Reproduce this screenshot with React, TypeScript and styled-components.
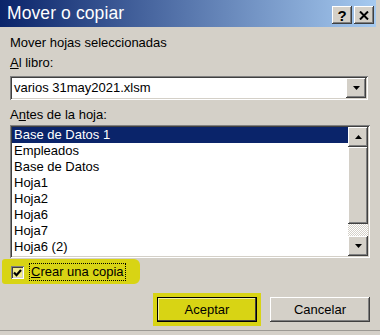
import React from "react";
import styled, { createGlobalStyle } from "styled-components";

const Global = createGlobalStyle`
  html, body { margin: 0; padding: 0; background: #d4d0c8; }
  body { font-family: "Liberation Sans", Arial, sans-serif; font-size: 13px; color: #000; }
`;

const FACE = "#d4d0c8";
const NAVY = "#0a246a";
const YELLOW = "#d8d414";

const raised = `
  background: ${FACE};
  box-shadow: inset -1px -1px #404040, inset 1px 1px #ffffff,
    inset -2px -2px #808080, inset 2px 2px ${FACE};
`;

const sunken = `
  box-shadow: inset 1px 1px #808080, inset -1px -1px #ffffff,
    inset 2px 2px #404040, inset -2px -2px ${FACE};
`;

const Window = styled.div`
  width: 380px;
  height: 331px;
  display: flex;
  flex-direction: column;
  background: ${FACE};
  border-bottom: 1px solid #9c9a94;
  box-sizing: border-box;
`;

const TitleBar = styled.div`
  height: 27px;
  width: 376px;
  box-sizing: border-box;
  display: flex;
  align-items: center;
  justify-content: space-between;
  padding: 0 2px 0 7px;
  background: linear-gradient(to right, ${NAVY}, #a6caf0);
`;

const Title = styled.span`
  color: #fff;
  font-size: 17.5px;
  letter-spacing: 0.1px;
`;

const Controls = styled.div`
  display: flex;
  gap: 2px;
  margin-top: 3px;
`;

const CaptionButton = styled.div`
  ${raised}
  width: 20px;
  height: 18px;
  display: flex;
  align-items: center;
  justify-content: center;
  font-weight: bold;
  font-size: 15px;
  line-height: 1;
`;

const Body = styled.div`
  display: flex;
  flex-direction: column;
  padding: 8px 10px 0 10px;
  width: 380px;
  box-sizing: border-box;
`;

const Label = styled.div<{ $gap?: number }>`
  line-height: 16px;
  height: 16px;
  margin-top: ${(p) => p.$gap ?? 0}px;
  white-space: nowrap;
`;

const Combo = styled.div`
  ${sunken}
  background: #fff;
  margin-top: 5px;
  height: 24px;
  width: 358px;
  box-sizing: border-box;
  padding: 2px;
  display: flex;
  align-items: center;
`;

const ComboText = styled.span`
  flex: 1;
  padding-left: 2px;
  line-height: 20px;
`;

const ArrowButton = styled.div<{ $h?: number }>`
  ${raised}
  width: 20px;
  height: ${(p) => p.$h ?? 20}px;
  display: flex;
  align-items: center;
  justify-content: center;
  flex: none;
`;

const ListBox = styled.div`
  ${sunken}
  background: #fff;
  margin-top: 2px;
  height: 133px;
  width: 360px;
  box-sizing: border-box;
  padding: 2px;
  display: flex;
`;

const Rows = styled.div`
  flex: 1;
  display: flex;
  flex-direction: column;
`;

const Row = styled.div<{ $selected?: boolean }>`
  height: 16px;
  line-height: 16px;
  padding-left: 2px;
  background: ${(p) => (p.$selected ? NAVY : "transparent")};
  color: ${(p) => (p.$selected ? "#fff" : "#000")};
  white-space: nowrap;
`;

const ScrollBar = styled.div`
  width: 20px;
  display: flex;
  flex-direction: column;
`;

const Thumb = styled.div`
  ${raised}
  height: 77px;
`;

const Track = styled.div`
  flex: 1;
  background: repeating-conic-gradient(${FACE} 0 25%, #ffffff 0 50%) 0 0 / 2px 2px;
`;

const CheckRow = styled.div`
  margin: 1px 0 0 -8px;
  width: 138px;
  height: 25px;
  background: ${YELLOW};
  border-radius: 3px 6px 6px 3px;
  display: flex;
  align-items: center;
  padding-left: 9px;
  box-sizing: border-box;
`;

const CheckBox = styled.div`
  width: 13px;
  height: 13px;
  box-sizing: border-box;
  ${sunken}
  background: #f0ec8a;
  display: flex;
  align-items: center;
  justify-content: center;
  margin-top: 2px;
`;

const FocusLabel = styled.span`
  margin-left: 5px;
  border: 1px dotted #000;
  padding: 0 1px;
  line-height: 16px;
`;

const ButtonRow = styled.div`
  margin-top: 13px;
  display: flex;
  justify-content: flex-end;
  gap: 13px;
`;

const PushButton = styled.button<{ $default?: boolean }>`
  width: 100px;
  height: 25px;
  font-family: inherit;
  font-size: 13px;
  color: #000;
  border: none;
  padding: 0;
  background: ${(p) => (p.$default ? YELLOW : FACE)};
  box-shadow: ${(p) =>
    p.$default
      ? `inset 0 0 0 1px #000, inset -2px -2px #404040, inset 2px 2px #f4f2a0, 0 0 0 4px ${YELLOW}`
      : `inset -1px -1px #404040, inset 1px 1px #ffffff, inset -2px -2px #808080, inset 2px 2px ${FACE}`};
  border-radius: 0;
`;

const Up = () => (
  <svg width="7" height="4" viewBox="0 0 7 4">
    <path d="M3.5 0 L7 4 L0 4 Z" fill="#000" />
  </svg>
);
const Down = () => (
  <svg width="7" height="4" viewBox="0 0 7 4">
    <path d="M0 0 L7 0 L3.5 4 Z" fill="#000" />
  </svg>
);

const sheets = [
  "Base de Datos 1",
  "Empleados",
  "Base de Datos",
  "Hoja1",
  "Hoja2",
  "Hoja6",
  "Hoja7",
  "Hoja6 (2)",
];

export default function App() {
  return (
    <>
      <Global />
      <Window>
        <TitleBar>
          <Title>Mover o copiar</Title>
          <Controls>
            <CaptionButton>?</CaptionButton>
            <CaptionButton>
              <svg width="10" height="9" viewBox="0 0 10 9">
                <path d="M1 0.5 L9 8.5 M9 0.5 L1 8.5" stroke="#000" strokeWidth="2" />
              </svg>
            </CaptionButton>
          </Controls>
        </TitleBar>
        <Body>
          <Label>Mover hojas seleccionadas</Label>
          <Label $gap={4}>
            <u>A</u>l libro:
          </Label>
          <Combo>
            <ComboText>varios 31may2021.xlsm</ComboText>
            <ArrowButton>
              <Down />
            </ArrowButton>
          </Combo>
          <Label $gap={7}>
            A<u>n</u>tes de la hoja:
          </Label>
          <ListBox>
            <Rows>
              {sheets.map((s, i) => (
                <Row key={s} $selected={i === 0}>
                  {s}
                </Row>
              ))}
            </Rows>
            <ScrollBar>
              <ArrowButton>
                <Up />
              </ArrowButton>
              <Thumb />
              <Track />
              <ArrowButton>
                <Down />
              </ArrowButton>
            </ScrollBar>
          </ListBox>
          <CheckRow>
            <CheckBox>
              <svg width="9" height="8" viewBox="0 0 9 8">
                <path d="M1 3.5 L3.5 6.2 L8 1" stroke="#000" strokeWidth="2.2" fill="none" />
              </svg>
            </CheckBox>
            <FocusLabel>
              <u>C</u>rear una copia
            </FocusLabel>
          </CheckRow>
          <ButtonRow>
            <PushButton $default>Aceptar</PushButton>
            <PushButton>Cancelar</PushButton>
          </ButtonRow>
        </Body>
      </Window>
    </>
  );
}
